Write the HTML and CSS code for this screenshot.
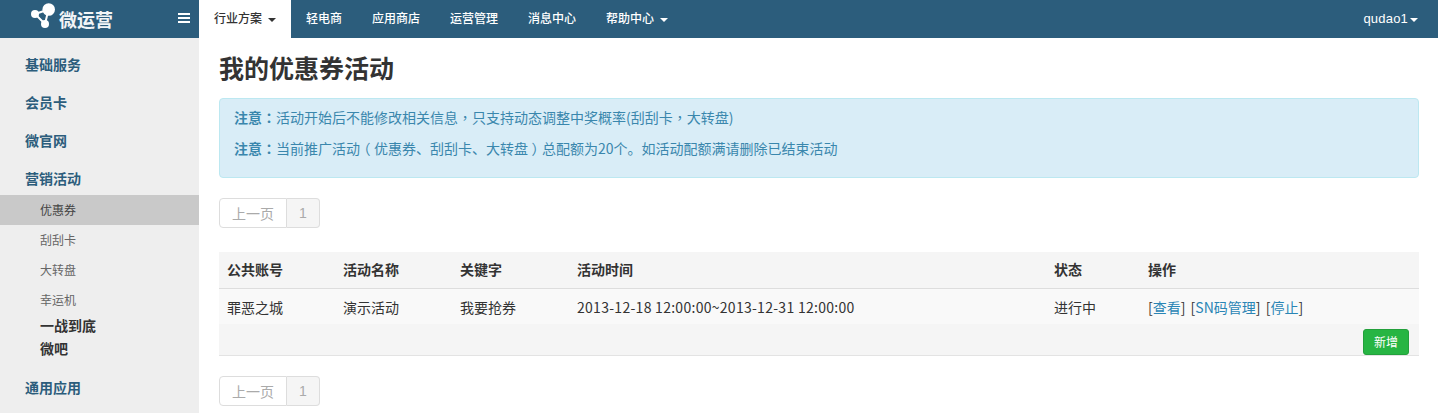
FILE: index.html
```html
<!DOCTYPE html>
<html lang="zh">
<head>
<meta charset="utf-8">
<title>我的优惠券活动</title>
<link rel="stylesheet" href="styles.css">
</head>
<body>
<header class="topbar">
  <div class="brand">
    <svg class="logo" width="26" height="26" viewBox="0 0 26 26">
      <path d="M5 11 L18.500 6.500 L15 21 Z" stroke="#fff" stroke-width="2" fill="none"/>
      <g fill="#fff"><circle cx="18.700" cy="6.500" r="6.300"/><circle cx="5" cy="11" r="4"/><circle cx="15" cy="21" r="4"/></g>
    </svg>
    <span class="brand-name">微运营</span>
    <span class="burger"><i></i><i></i><i></i></span>
  </div>
  <nav class="nav">
    <a class="nav-item active">行业方案<b class="caret"></b></a>
    <a class="nav-item">轻电商</a>
    <a class="nav-item">应用商店</a>
    <a class="nav-item">运营管理</a>
    <a class="nav-item">消息中心</a>
    <a class="nav-item">帮助中心<b class="caret"></b></a>
  </nav>
  <div class="user">qudao1<b class="caret tight"></b></div>
</header>
<div class="layout">
  <aside class="side">
    <div class="group">基础服务</div>
    <div class="group">会员卡</div>
    <div class="group">微官网</div>
    <div class="group open">营销活动</div>
    <div class="sub current">优惠券</div>
    <div class="sub">刮刮卡</div>
    <div class="sub">大转盘</div>
    <div class="sub">幸运机</div>
    <div class="sub-strong first">一战到底</div>
    <div class="sub-strong">微吧</div>
    <div class="group last">通用应用</div>
  </aside>
  <main class="main">
    <h1 class="title">我的优惠券活动</h1>
    <div class="alert">
      <p><strong class="punct" lang="zh-Hant">注意：</strong>活动开始后不能修改相关信息<span class="punct" lang="zh-Hant">，</span>只支持动态调整中奖概率(刮刮卡<span class="punct" lang="zh-Hant">，</span>大转盘)</p>
      <p><strong class="punct" lang="zh-Hant">注意：</strong>当前推广活动<span class="paren">（</span>优惠券、刮刮卡、大转盘<span class="paren">）</span>总配额为20个。如活动配额满请删除已结束活动</p>
    </div>
    <div class="pager"><span class="prev">上一页</span><span class="num">1</span></div>
    <table class="grid">
      <thead>
        <tr><th class="c1">公共账号</th><th class="c2">活动名称</th><th class="c3">关键字</th><th class="c4">活动时间</th><th class="c5">状态</th><th>操作</th></tr>
      </thead>
      <tbody>
        <tr class="row"><td>罪恶之城</td><td>演示活动</td><td>我要抢券</td><td class="date">2013-12-18 12:00:00~2013-12-31 12:00:00</td><td>进行中</td><td class="ops">[<a>查看</a>] [<a>SN码管理</a>] [<a>停止</a>]</td></tr>
      </tbody>
      <tfoot>
        <tr><td colspan="6" class="foot"><button class="add">新增</button></td></tr>
      </tfoot>
    </table>
    <div class="pager"><span class="prev">上一页</span><span class="num">1</span></div>
  </main>
</div>
</body>
</html>
```
FILE: styles.css
```css
* { box-sizing: border-box; }
html, body { margin: 0; padding: 0; height: 413px; overflow: hidden; background: #fff; }
body { font-family: "Noto Sans CJK SC", "Liberation Sans", sans-serif; font-size: 14px; color: #333; }
.topbar { display: flex; height: 38px; background: #2c5d7c; color: #fff; }
.brand { position: relative; width: 199px; display: flex; align-items: flex-start; flex: none; }
.logo { margin: 3px 0 0 30px; flex: none; }
.brand-name { margin-left: 3px; font-size: 18px; font-weight: 700; line-height: 38px; color: #f2f5f7; }
.burger { position: absolute; left: 178px; top: 13px; width: 12px; display: flex; flex-direction: column; gap: 2px; }
.burger i { display: block; height: 2px; background: #fff; }
.nav { display: flex; flex: 1; }
.nav-item { padding: 0 15px; line-height: 36px; font-size: 12px; font-weight: 500; color: #fff; white-space: nowrap; }
.nav-item.active { background: #fff; color: #333; height: 38px; }
.caret { display: inline-block; width: 0; height: 0; margin-left: 6px; vertical-align: middle; border-top: 4px solid currentColor; border-left: 4px solid transparent; border-right: 4px solid transparent; }
.caret.tight { margin-left: 2px; }
.user { padding-right: 20px; font-family: "Liberation Sans", sans-serif; font-size: 13px; letter-spacing: .2px; line-height: 37px; color: #fff; white-space: nowrap; }
.layout { display: flex; height: 375px; }
.side { width: 199px; flex: none; background: #eee; padding-top: 7px; }
.group { height: 38px; line-height: 38px; padding-left: 25px; font-size: 14px; font-weight: 700; color: #2c5d7c; }
.group.open { height: 36px; }
.sub { height: 30px; line-height: 30px; padding-left: 40px; font-size: 12px; color: #666; }
.sub.current { background: #c9c9c9; color: #444; }
.sub-strong { height: 23px; line-height: 23px; padding-left: 40px; font-size: 14px; font-weight: 700; color: #333; }
.sub-strong.first { margin-top: -1px; }
.group.last { margin-top: 8px; }
.main { flex: 1; padding: 0 19px 0 20px; min-width: 0; }
.title { margin: 11px 0 0; height: 37px; font-size: 25px; line-height: 37px; font-weight: 700; color: #333; }
.alert { margin-top: 12px; height: 80px; padding: 8px 14px; background: #d9edf7; border: 1px solid #bce8f1; border-radius: 4px; color: #3a87ad; font-size: 14px; }
.alert p { margin: 0 0 11px; line-height: 20px; }
.punct { font-family: "Noto Sans CJK TC", sans-serif; }
.paren { font-feature-settings: "halt"; padding: 0 3.5px; }
.pager { display: flex; margin-top: 20px; height: 30px; width: 101px; font-size: 14px; color: #aaa; }
.prev { width: 68px; text-align: center; line-height: 28px; background: #fff; border: 1px solid #ddd; border-radius: 4px 0 0 4px; }
.num { width: 33px; text-align: center; line-height: 28px; background: #f5f5f5; border: 1px solid #ddd; border-left: 0; border-radius: 0 4px 4px 0; font-family: "Liberation Sans", sans-serif; }
.grid { width: 100%; margin-top: 24px; border-collapse: collapse; table-layout: fixed; font-size: 14px; }
.grid th { height: 36px; padding: 0 8px 2px; text-align: left; font-weight: 700; font-size: 14px; background: #f5f5f5; border-bottom: 1px solid #ddd; }
.grid td { padding: 1px 8px 0; }
.c1 { width: 116px; } .c2 { width: 117px; } .c3 { width: 117px; } .c4 { width: 477px; } .c5 { width: 94px; }
.row td { height: 36px; background: #f9f9f9; color: #333; }
.grid .date { letter-spacing: .28px; }
.grid .ops { word-spacing: 2px; }
.row a { color: #2a85b5; }
.grid td.foot { height: 31px; padding: 5px 10px 0 0; vertical-align: top; background: #f5f5f5; border-bottom: 1px solid #e3e3e3; }
.add { display: block; margin-left: auto; width: 46px; height: 26px; padding: 0; font: inherit; font-size: 12px; line-height: 24px; color: #fff; background: #27b543; border: 1px solid #23a03c; border-radius: 3px; }
```
